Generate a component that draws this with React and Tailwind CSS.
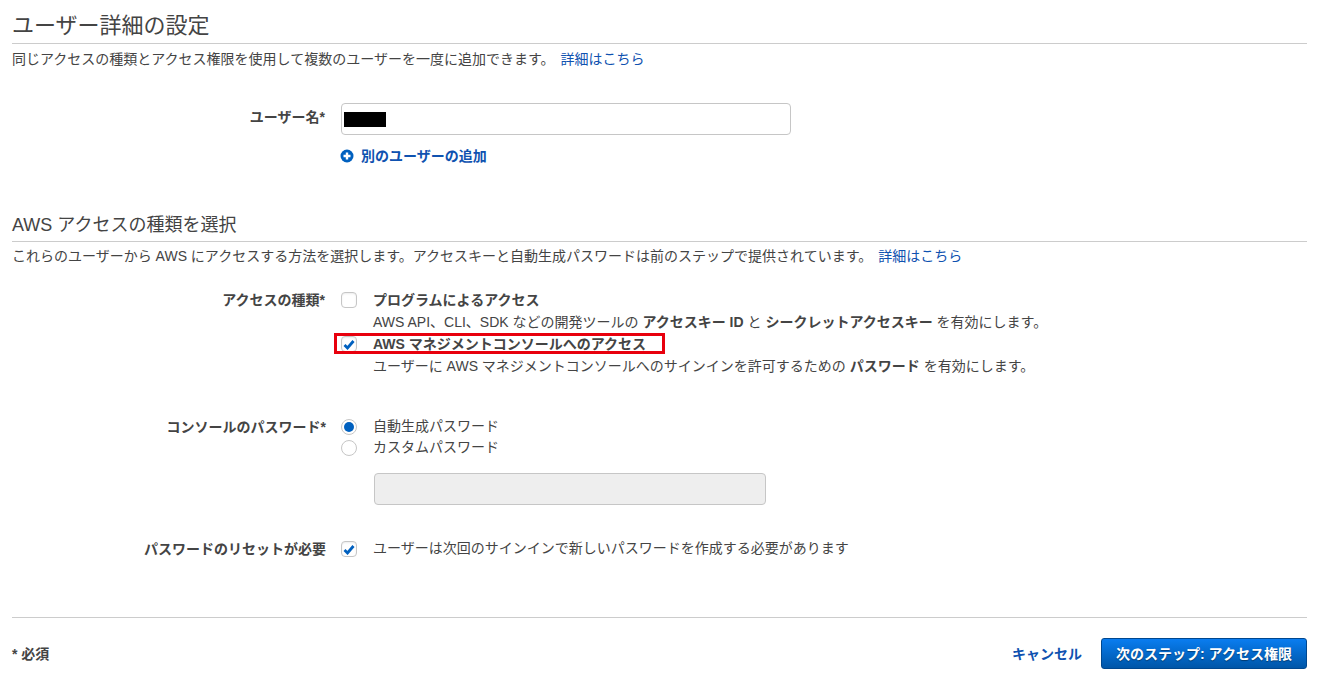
import React from "react";

const font = "font-['Liberation_Sans','Noto_Sans_CJK_JP',sans-serif]";

function Check({ checked }) {
  return (
    <span className="w-4 h-4 mt-[3px] rounded-[4px] border border-[#c6c6c6] bg-white flex items-center justify-center shadow-[inset_0_1px_2px_rgba(0,0,0,0.08)]">
      {checked && (
        <svg width="12" height="11" viewBox="0 0 12 11">
          <path d="M1.5 6 L4.5 9 L10.5 2" fill="none" stroke="#0060bf" strokeWidth="2.8" />
        </svg>
      )}
    </span>
  );
}

function Radio({ checked }) {
  return (
    <span className="w-4 h-4 rounded-full border border-[#c6c6c6] bg-white flex items-center justify-center">
      {checked && <span className="w-[10px] h-[10px] rounded-full bg-[#0060bf]" />}
    </span>
  );
}

function Row({ label, className, labelClass = "", children }) {
  return (
    <div className={`flex ${className}`}>
      <div className={`w-[314px] text-right font-bold text-[14px] leading-[22px] ${labelClass}`}>{label}</div>
      <div className="ml-[15px] flex-1">{children}</div>
    </div>
  );
}

export default function App() {
  return (
    <div className={`${font} w-[1334px] h-[697px] bg-white text-[#444] text-[14px] pl-3 pr-[27px] pt-[9px] overflow-hidden`}>
      <h2 className="text-[22px] leading-[33px] pb-px border-b border-[#ccc]">ユーザー詳細の設定</h2>
      <p className="leading-[22px] mt-1">
        同じアクセスの種類とアクセス権限を使用して複数のユーザーを一度に追加できます。
        <a className="text-[#0f52b0] ml-[6px]">詳細はこちら</a>
      </p>

      <Row label="ユーザー名*" labelClass="mt-[3px] pr-px" className="mt-[33px]">
        <div className="w-[450px] h-8 rounded-[4px] border border-[#c6c6c6] flex items-center pl-[2px]">
          <span className="w-[42px] h-[15px] bg-black" />
        </div>
        <a className="mt-[10px] -ml-px flex items-center gap-[7px] font-bold text-[#0f52b0] leading-[22px]">
          <svg width="14" height="14" viewBox="0 0 14 14">
            <circle cx="7" cy="7" r="6.5" fill="#0060bf" />
            <path d="M7 3.5 V10.5 M3.5 7 H10.5" stroke="#fff" strokeWidth="2.4" />
          </svg>
          別のユーザーの追加
        </a>
      </Row>

      <h3 className="text-[18px] leading-[26px] mt-[45px] pb-[3px] border-b border-[#ccc]">AWS アクセスの種類を選択</h3>
      <p className="leading-[22px] mt-[3px]">
        これらのユーザーから AWS にアクセスする方法を選択します。アクセスキーと自動生成パスワードは前のステップで提供されています。
        <a className="text-[#0f52b0] ml-[6px]">詳細はこちら</a>
      </p>

      <Row label="アクセスの種類*" labelClass="pr-px" className="mt-[22px]">
        <div className="relative">
          <div className="absolute left-[-7px] top-[44px] w-[331px] h-[21px] border-[3px] border-[#e8000d]" />
          <div className="flex gap-4">
            <Check />
            <div className="leading-[22px]">
              <div className="font-bold">プログラムによるアクセス</div>
              <div>
                AWS API、CLI、SDK などの開発ツールの <b>アクセスキー ID</b> と <b>シークレットアクセスキー</b> を有効にします。
              </div>
            </div>
          </div>
          <div className="flex gap-4">
            <Check checked />
            <div className="leading-[22px]">
              <div className="font-bold">AWS マネジメントコンソールへのアクセス</div>
              <div>
                ユーザーに AWS マネジメントコンソールへのサインインを許可するための <b>パスワード</b> を有効にします。
              </div>
            </div>
          </div>
        </div>
      </Row>

      <Row label="コンソールのパスワード*" className="mt-[39px]">
        <div className="flex items-center gap-4 h-[21px]">
          <Radio checked />
          <span>自動生成パスワード</span>
        </div>
        <div className="flex items-center gap-4 h-[21px]">
          <Radio />
          <span>カスタムパスワード</span>
        </div>
        <div className="ml-[33px] mt-[15px] w-[392px] h-8 rounded-[4px] border border-[#c6c6c6] bg-[#eee]" />
      </Row>

      <Row label="パスワードのリセットが必要" className="mt-[33px]">
        <div className="flex gap-4 leading-[22px]">
          <Check checked />
          <span className="-mt-px">ユーザーは次回のサインインで新しいパスワードを作成する必要があります</span>
        </div>
      </Row>

      <div className="mt-[57px] pt-5 border-t border-[#ccc] flex items-center justify-between">
        <span className="font-bold mt-px">* 必須</span>
        <div className="flex items-center gap-[19px]">
          <a className="font-bold text-[#0f52b0] mt-px">キャンセル</a>
          <button className="w-[206px] h-[31px] pt-px rounded-[3px] border border-[#00478f] bg-gradient-to-b from-[#0a7df0] to-[#0056a8] text-white font-bold [text-shadow:0_1px_1px_rgba(0,0,0,0.4)]">
            次のステップ: アクセス権限
          </button>
        </div>
      </div>
    </div>
  );
}
